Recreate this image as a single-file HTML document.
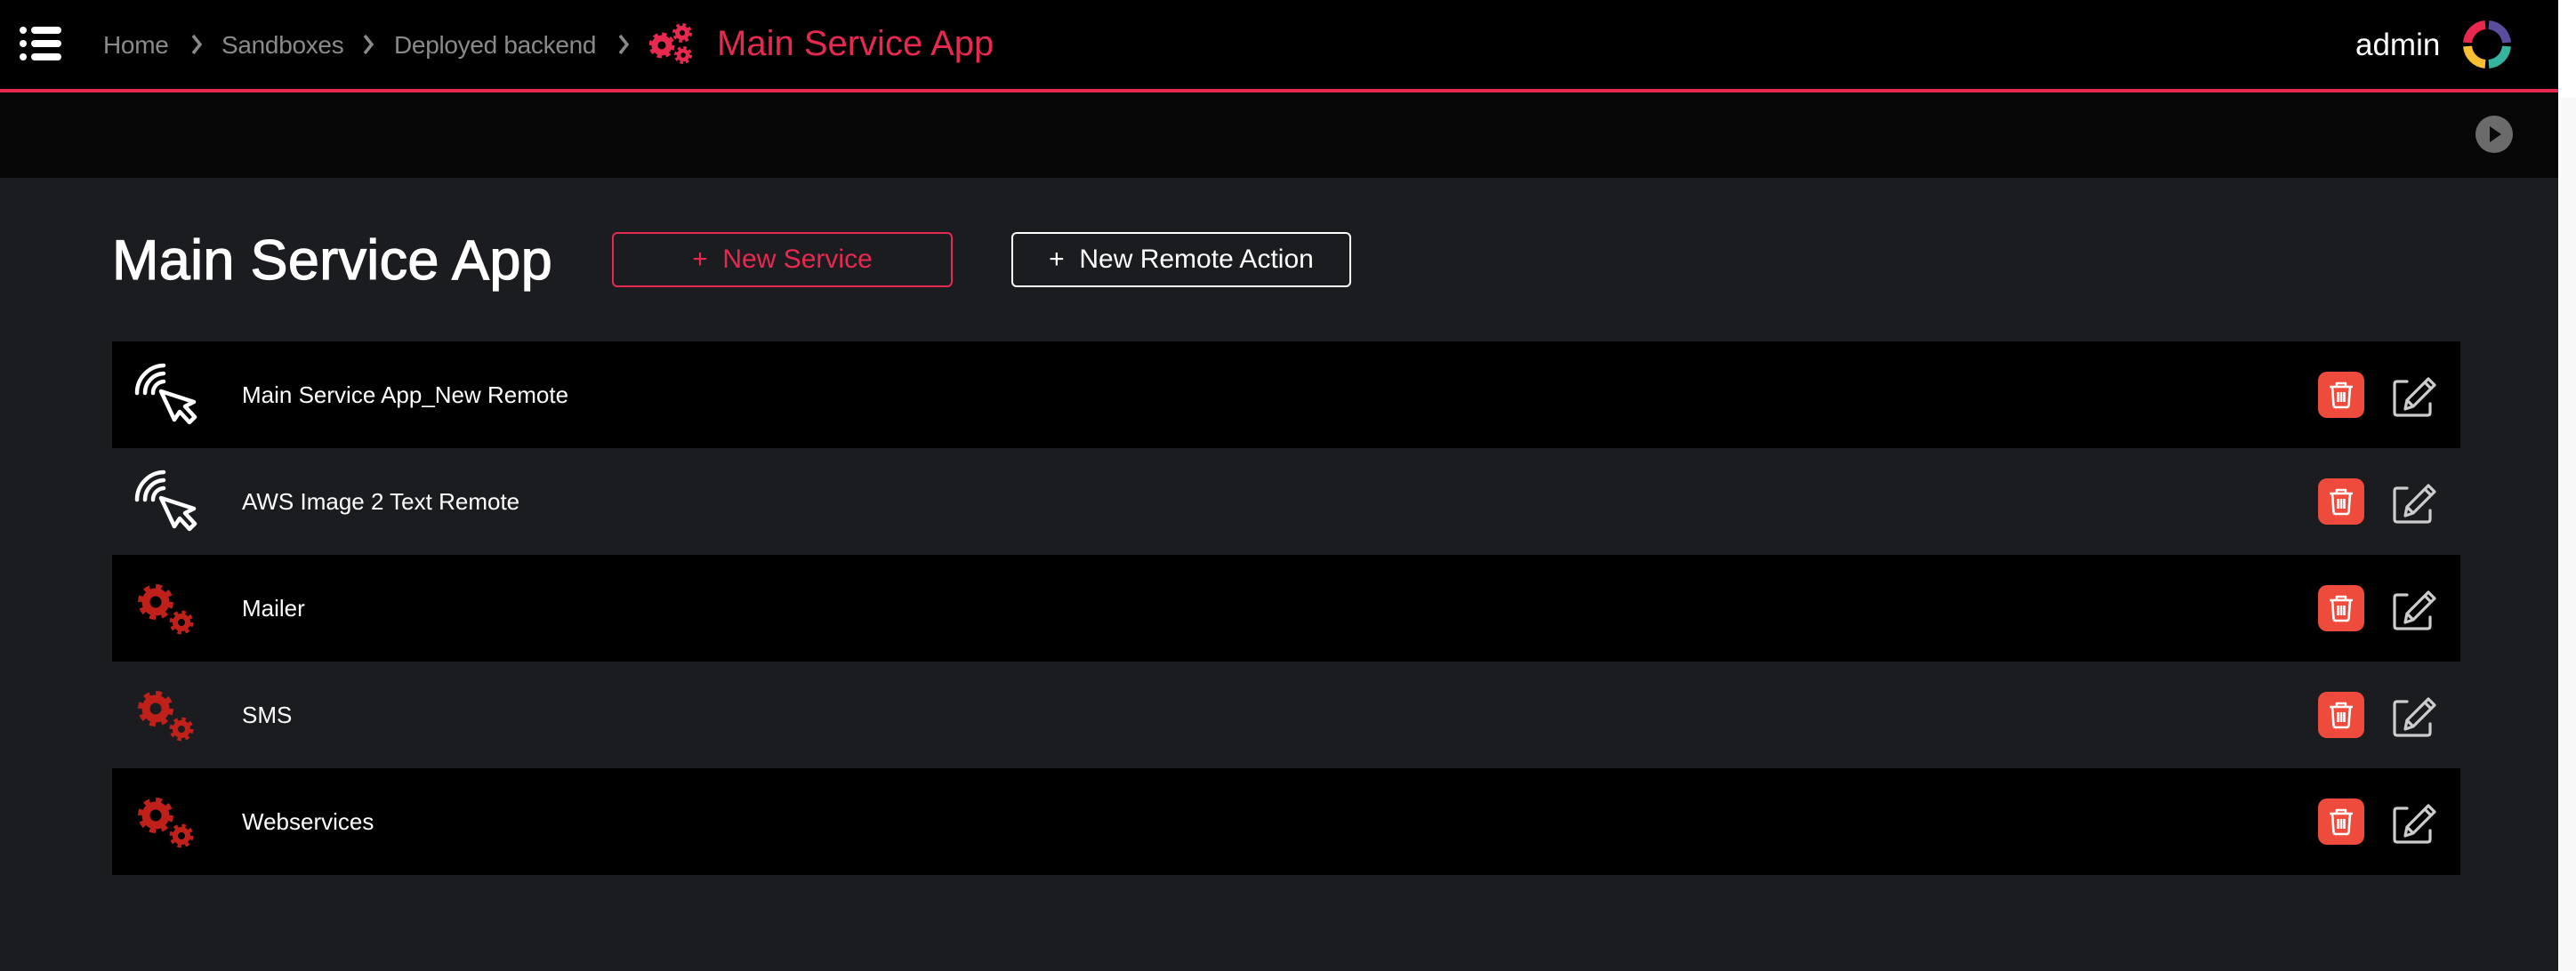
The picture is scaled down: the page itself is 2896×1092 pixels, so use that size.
<!DOCTYPE html>
<html><head><meta charset="utf-8"><style>
*{margin:0;padding:0;box-sizing:border-box}
body{width:2896px;height:1092px;background:#1b1c1f;font-family:"Liberation Sans",sans-serif;position:relative;overflow:hidden}
.abs{position:absolute}
.hdr{left:0;top:0;width:2876px;height:100px;background:#000}
.red{left:0;top:100px;width:2876px;height:4px;background:#e8294f}
.sub{left:0;top:104px;width:2876px;height:96px;background:#070707}
.rs1{left:2876px;top:0;width:20px;height:110px;background:#fff}
.rs2{left:2876px;top:110px;width:20px;height:982px;background:#f8f8f8}
.bc{color:#8a8a8a;font-size:28px;top:34px;line-height:34px;letter-spacing:-0.3px}
.row{left:126px;width:2640px;height:120px}
.row .t{position:absolute;left:146px;top:0;line-height:120px;color:#fff;font-size:26px}
.btn{top:261px;height:62px;border-radius:6px;font-size:30px;line-height:58px;text-align:center}
</style></head><body>
<div class="abs hdr"></div><div class="abs red"></div><div class="abs sub"></div>
<div class="abs rs1"></div><div class="abs rs2"></div>
<svg class="abs" style="left:20px;top:26px" width="52" height="46"><g fill="#fff"><circle cx="6" cy="8" r="4"/><circle cx="6" cy="23" r="4"/><circle cx="6" cy="38" r="4"/><rect x="15" y="4" width="34" height="8" rx="4"/><rect x="15" y="19" width="34" height="8" rx="4"/><rect x="15" y="34" width="34" height="8" rx="4"/></g></svg>
<div class="abs bc" style="left:116px">Home</div>
<svg class="abs" style="left:214px;top:38px" width="14" height="24"><path d="M3 2 L11 12 L3 22" fill="none" stroke="#8a8a8a" stroke-width="3.5"/></svg>
<div class="abs bc" style="left:249px">Sandboxes</div>
<svg class="abs" style="left:407px;top:38px" width="14" height="24"><path d="M3 2 L11 12 L3 22" fill="none" stroke="#8a8a8a" stroke-width="3.5"/></svg>
<div class="abs bc" style="left:443px">Deployed backend</div>
<svg class="abs" style="left:694px;top:38px" width="14" height="24"><path d="M3 2 L11 12 L3 22" fill="none" stroke="#8a8a8a" stroke-width="3.5"/></svg>
<svg class="abs" style="left:730px;top:22px" width="54" height="54" viewBox="0 0 54 54"><g fill="none" stroke="#e8294f">
<circle cx="14" cy="29" r="8" stroke-width="7"/><circle cx="14" cy="29" r="12" stroke-width="5" stroke-dasharray="5 4.4"/>
<circle cx="37" cy="15" r="5.5" stroke-width="5"/><circle cx="37" cy="15" r="9" stroke-width="4" stroke-dasharray="3.5 3.6"/>
<circle cx="38" cy="40" r="5" stroke-width="4.5"/><circle cx="38" cy="40" r="8" stroke-width="4" stroke-dasharray="3.3 3"/></g></svg>
<div class="abs" style="left:806px;top:26px;color:#e8294f;font-size:40px;line-height:46px">Main Service App</div>
<div class="abs" style="left:2648px;top:31px;color:#fff;font-size:35px;line-height:40px">admin</div>
<svg class="abs" style="left:2766px;top:20px" width="60" height="60" viewBox="0 0 60 60"><g fill="none" stroke-width="10">
<path d="M8 28 A22 22 0 0 1 28 8" stroke="#e8294f"/><path d="M32 8 A22 22 0 0 1 52 28" stroke="#5b4d9e"/>
<path d="M52 32 A22 22 0 0 1 32 52" stroke="#36b49f"/><path d="M28 52 A22 22 0 0 1 8 32" stroke="#fbbf33"/></g></svg>
<svg class="abs" style="left:2782px;top:129px" width="44" height="44"><circle cx="22" cy="22" r="21" fill="#6b6b6b"/><path d="M17 13 L30 22 L17 31Z" fill="#0a0a0a"/></svg>
<div class="abs" style="left:126px;top:258px;color:#fff;font-size:63px;line-height:70px;-webkit-text-stroke:1.2px #fff;letter-spacing:0.3px">Main Service App</div>
<div class="abs btn" style="left:688px;width:383px;border:2px solid #e8294f;color:#e8294f">+&nbsp; New Service</div>
<div class="abs btn" style="left:1137px;width:382px;border:2px solid #fff;color:#fff">+&nbsp; New Remote Action</div>

<svg width="0" height="0" style="position:absolute"><defs>
<g id="rem" fill="none" stroke="#fff" stroke-width="4.5" stroke-linecap="round" stroke-linejoin="round">
<path d="M24 48 A31 31 0 0 1 54 17"/><path d="M33 48 A22 22 0 0 1 54 26"/><path d="M42 48 A13 13 0 0 1 54 35"/>
<path d="M51 46 L66 78 L72 69 L83 81 L89 75 L78 63 L88 58 Z"/></g>
<g id="gear" fill="none" stroke="#c0201a">
<circle cx="21" cy="21" r="11" stroke-width="9"/><circle cx="21" cy="21" r="17" stroke-width="6" stroke-dasharray="6.7 6.65"/>
<circle cx="50" cy="44" r="7" stroke-width="6"/><circle cx="50" cy="44" r="11" stroke-width="5" stroke-dasharray="4.3 4.34"/></g>
<g id="act"><rect x="0" y="0" width="52" height="52" rx="10" fill="#ee4b3d"/>
<g fill="none" stroke="#fff" stroke-width="2.6" stroke-linejoin="round"><path d="M13 17 H39"/><path d="M21 17 V13 H31 V17"/><path d="M16 17 L17.5 38 Q18 40 20 40 H32 Q34 40 34.5 38 L36 17"/><path d="M22.5 23 V34 M26 23 V34 M29.5 23 V34"/></g>
<g fill="none" stroke="#ccc" stroke-width="3.2" stroke-linecap="round" stroke-linejoin="round" transform="translate(82,0)">
<path d="M18 11 H7 Q4 11 4 14 V46 Q4 49 7 49 H41 Q44 49 44 46 V36"/>
<path d="M16 42 L18 32 L42 8 L49 15 L25 39 Z M18 32 L25 39 M38 12 L45 19"/></g></g>
</defs></svg>

<div class="abs row" style="top:384px;background:#000"><svg class="abs" style="left:4px;top:10px" width="100" height="100"><use href="#rem"/></svg><div class="t">Main Service App_New Remote</div><svg class="abs" style="left:2480px;top:34px" width="140" height="56"><use href="#act"/></svg></div>
<div class="abs row" style="top:504px;background:#1b1c1f"><svg class="abs" style="left:4px;top:10px" width="100" height="100"><use href="#rem"/></svg><div class="t">AWS Image 2 Text Remote</div><svg class="abs" style="left:2480px;top:34px" width="140" height="56"><use href="#act"/></svg></div>
<div class="abs row" style="top:624px;background:#000"><svg class="abs" style="left:28px;top:32px" width="70" height="62"><use href="#gear"/></svg><div class="t">Mailer</div><svg class="abs" style="left:2480px;top:34px" width="140" height="56"><use href="#act"/></svg></div>
<div class="abs row" style="top:744px;background:#1b1c1f"><svg class="abs" style="left:28px;top:32px" width="70" height="62"><use href="#gear"/></svg><div class="t">SMS</div><svg class="abs" style="left:2480px;top:34px" width="140" height="56"><use href="#act"/></svg></div>
<div class="abs row" style="top:864px;background:#000"><svg class="abs" style="left:28px;top:32px" width="70" height="62"><use href="#gear"/></svg><div class="t">Webservices</div><svg class="abs" style="left:2480px;top:34px" width="140" height="56"><use href="#act"/></svg></div>
</body></html>
